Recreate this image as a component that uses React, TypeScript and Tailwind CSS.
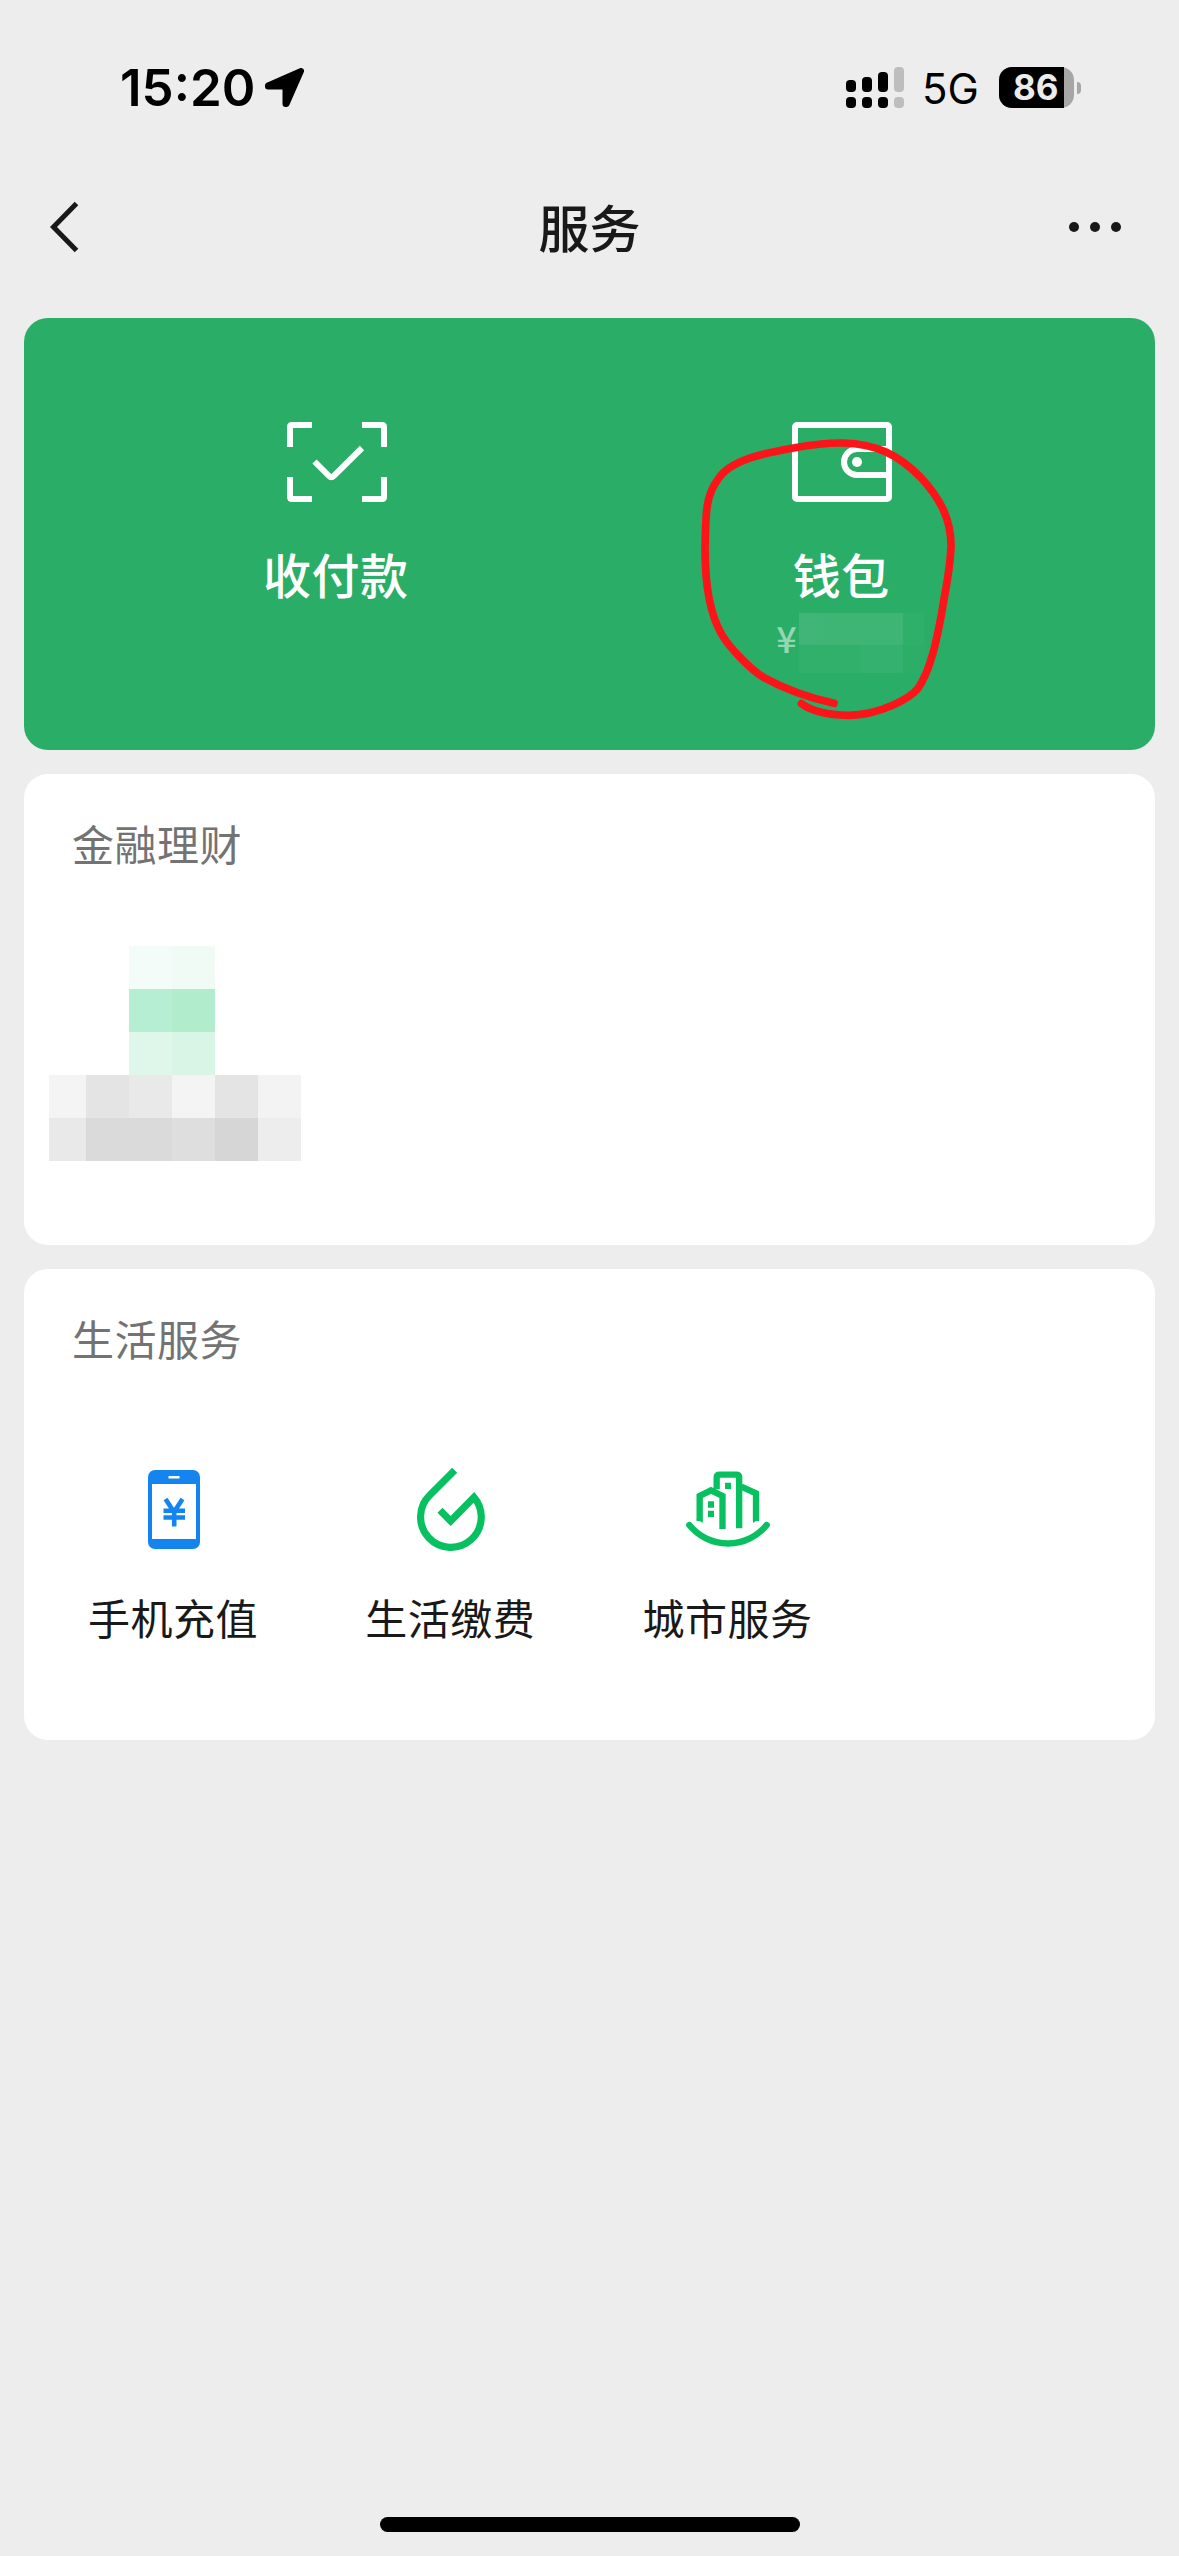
import type { ReactNode } from 'react'

const cjk = "font-['Noto_Sans_CJK_SC','Noto_Sans',sans-serif]"

// Pixelated avatar/name block: one row per array, left to right
const mosaicRows = [
  ['#ffffff', '#ffffff', '#f3fcf8', '#f1fbf6', '#ffffff', '#ffffff'],
  ['#ffffff', '#ffffff', '#b5eed3', '#b1edcd', '#ffffff', '#ffffff'],
  ['#ffffff', '#ffffff', '#dff6ea', '#d8f5e6', '#ffffff', '#ffffff'],
  ['#f4f4f4', '#e4e4e4', '#e9e9e9', '#f4f4f4', '#e4e4e4', '#f3f3f3'],
  ['#e9e9e9', '#dadada', '#dadada', '#dedede', '#d6d6d6', '#ededed'],
]

const signalBars = [
  { height: 'h-[12px]', color: 'bg-black' },
  { height: 'h-[15px]', color: 'bg-black' },
  { height: 'h-[20px]', color: 'bg-black' },
  { height: 'h-[25px]', color: 'bg-[#bdbdbd]' },
]

function PayIcon() {
  return (
    <svg width="100" height="80" viewBox="0 0 100 80" fill="none" stroke="#fff" strokeWidth="6">
      <path d="M3 25V5Q3 3 5 3H25M75 3H95Q97 3 97 5V25M97 55V75Q97 77 95 77H75M25 77H5Q3 77 3 75V55" />
      <path d="M27.500 39.500L42 54Q44.300 56.500 46.600 54L75 26" />
    </svg>
  )
}

function WalletIcon() {
  return (
    <svg width="100" height="80" viewBox="0 0 100 80" fill="none" stroke="#fff" strokeWidth="6">
      <rect x="3" y="3" width="94" height="74" rx="2" />
      <path d="M97 27H65a13 13 0 0 0 0 26H97" />
      <circle cx="65" cy="40" r="5" fill="#fff" stroke="none" />
    </svg>
  )
}

function PhoneIcon() {
  return (
    <svg width="52" height="79" viewBox="0 0 52 79" fill="none">
      <rect width="52" height="79" rx="7" fill="#1485ee" />
      <rect x="4" y="14" width="44" height="55" fill="#fff" />
      <rect x="20.500" y="6" width="11" height="2.500" fill="#fff" />
      <path d="M17.500 29L26 42L34.500 29M15.500 40.800H37M15.500 47.500H37M26.200 41V56.500" stroke="#1485ee" strokeWidth="4.600" />
    </svg>
  )
}

function DropIcon() {
  return (
    <svg width="68" height="83" viewBox="201 84 204 249" fill="none" stroke="#07c160" strokeWidth="21.500">
      <path d="M314 91L239 166A91 91 0 1 0 372 172L302 243L270 211" />
    </svg>
  )
}

function CityIcon() {
  return (
    <svg width="84" height="77" viewBox="198 93 252 231" fill="none" stroke="#07c160" strokeWidth="19">
      <path d="M208 255A149 149 0 0 0 440 255" strokeLinecap="round" />
      <path d="M239 243V168L273 151L307.500 168V267" />
      <path d="M290 148V112Q290 104 299 104H349Q357.500 104 357.500 112V265" />
      <path d="M364 140L408 160V243" />
      <g fill="#07c160" stroke="none">
        <path d="M230 240L248 240V249L230 237ZM399 240H417V237L399 249Z" />
        <path d="M264 184h18v19h-18zM264 212h18v19h-18zM315 128h18v19h-18z" />
      </g>
    </svg>
  )
}

const services = [
  { label: '手机充值', icon: <PhoneIcon /> },
  { label: '生活缴费', icon: <DropIcon /> },
  { label: '城市服务', icon: <CityIcon /> },
]

function StatusBar() {
  return (
    <div className="flex h-[175px] items-center justify-between pr-[98px] pl-[120px] font-['Inter',sans-serif] text-black">
      <div className="flex items-center">
        <span className="w-[145px] pt-[1px] text-[51px] leading-[60px] font-semibold">15:20</span>
        <svg width="40" height="40" viewBox="0 0 40 40" strokeLinejoin="round">
          <path d="M36 3L3 17.500V18.500H20.500V36H21.500Z" fill="#000" stroke="#000" strokeWidth="6" />
        </svg>
      </div>
      <div className="flex items-center">
        <div className="flex h-[41px] items-end gap-[6px]">
          {signalBars.map((bar) => (
            <div key={bar.height} className="flex flex-col gap-[5px]">
              <div className={`w-[10px] rounded-[4px] ${bar.height} ${bar.color}`} />
              <div className={`h-[11px] w-[10px] rounded-[4px] ${bar.color}`} />
            </div>
          ))}
        </div>
        <span className="ml-[18px] w-[77px] pt-[3px] text-[42px] leading-[48px]">5G</span>
        <div className="flex h-[41px] w-[75px] items-center rounded-[13px] bg-[#a6a6a6]">
          <div className="flex h-full w-[65px] items-center rounded-l-[13px] bg-black pl-[14px]">
            <span className="text-[35px] leading-[41px] font-bold text-[#ececec]">86</span>
          </div>
        </div>
        <div className="ml-[3px] h-[12px] w-[4px] rounded-r-full bg-[#a6a6a6]" />
      </div>
    </div>
  )
}

function NavBar() {
  return (
    <header className="grid h-[103px] grid-cols-[1fr_auto_1fr] items-center px-[49px]">
      <svg width="32" height="54" viewBox="0 0 32 54" fill="none" stroke="#191919" strokeWidth="5">
        <path d="M27.500 3.500L4.500 27L27.500 50.500" />
      </svg>
      <h1 className="-mt-[2px] text-center text-[51px] leading-[72px] font-medium text-[#191919]">服务</h1>
      <div className="flex justify-end gap-[11px] pr-[9px]">
        <span className="size-[10px] rounded-full bg-[#191919]" />
        <span className="size-[10px] rounded-full bg-[#191919]" />
        <span className="size-[10px] rounded-full bg-[#191919]" />
      </div>
    </header>
  )
}

function Section({ title, children }: { title: string; children: ReactNode }) {
  return (
    <section className="h-[471px] rounded-[24px] bg-white pt-[39px]">
      <h2 className="pl-[48px] text-[42px] leading-[60px] tracking-[0.5px] text-[#737373]">{title}</h2>
      {children}
    </section>
  )
}

export default function App() {
  return (
    <div className={`flex h-[2556px] w-[1179px] flex-col bg-[#ededed] ${cjk}`}>
      <StatusBar />
      <NavBar />

      <main className="flex grow flex-col gap-6 px-6 pt-10">
        <div className="relative grid h-[432px] grid-cols-2 rounded-[24px] bg-[#2aae67] px-[60px] pt-[104px] text-white">
          <div className="flex flex-col items-center">
            <PayIcon />
            <span className="mt-[35px] pr-[2px] text-[48px] leading-[72px] font-medium tracking-[0.5px]">收付款</span>
          </div>
          <div className="flex flex-col items-center">
            <WalletIcon />
            <span className="mt-[35px] pr-[2px] text-[48px] leading-[72px] font-medium tracking-[0.5px]">钱包</span>
            {/* Balance, masked */}
            <div className="mt-[4px] flex h-[60px] pl-4">
              <span className="w-[23px] text-[36px] leading-[48px] font-medium text-[#95d6b3]">¥</span>
              <div>
                <div className="flex h-[32px]">
                  <div className="w-[18px] bg-[#41b577]" />
                  <div className="w-[86px] bg-[#3fb575]" />
                  <div className="w-[21px] bg-[#2eaf6a]" />
                </div>
                <div className="flex h-[28px]">
                  <div className="w-[61px] bg-[#31b06c]" />
                  <div className="w-[43px] bg-[#34b16e]" />
                  <div className="w-[21px] bg-[#2cae68]" />
                </div>
              </div>
            </div>
          </div>

          {/* Hand-drawn marker around the wallet */}
          <svg
            className="absolute top-[82px] left-[666px]"
            width="280"
            height="330"
            viewBox="0 0 840 990"
            fill="none"
            stroke="#fc1418"
            strokeWidth="23"
            strokeLinecap="round"
            strokeLinejoin="round"
          >
            <path d="M432 910C340 890 262 855 222 833C180 808 118 742 95 703C55 635 45 530 45 445C48 350 44 290 84 238C120 180 220 160 310 144C370 133 415 128 460 129C560 132 625 165 690 230C752 296 784 360 783 440C780 520 765 570 755 640C740 720 722 810 684 865C660 895 570 945 475 946C410 945 360 930 334 911" />
          </svg>
        </div>

        <Section title="金融理财">
          <div className="mt-[73px] ml-[25px] grid w-[252px] grid-cols-[37px_repeat(5,43px)]">
            {mosaicRows.flat().map((color, i) => (
              <div key={i} className="h-[43px]" style={{ backgroundColor: color }} />
            ))}
          </div>
        </Section>

        <Section title="生活服务">
          <div className="mt-[81px] grid grid-cols-4 px-[11px]">
            {services.map((item) => (
              <div key={item.label} className="flex flex-col items-center">
                <div className="flex h-[121px] items-center">{item.icon}</div>
                <span className="mt-[17px] pr-[1px] text-[42px] leading-[60px] tracking-[0.5px] text-[#191919]">
                  {item.label}
                </span>
              </div>
            ))}
          </div>
        </Section>
      </main>

      <div className="mx-auto mb-[24px] h-[15px] w-[420px] rounded-full bg-black" />
    </div>
  )
}
